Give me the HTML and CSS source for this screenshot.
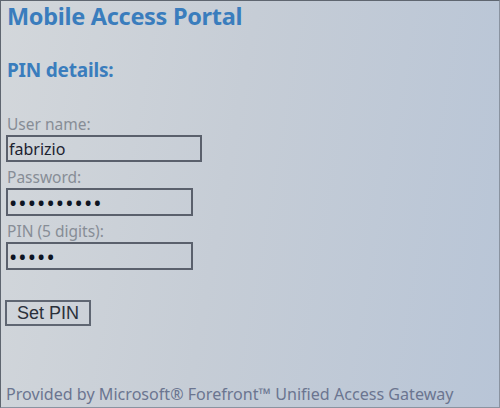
FILE: index.html
```html
<!DOCTYPE html>
<html lang="en">
<head>
    <meta charset="UTF-8">
    <meta name="viewport" content="width=device-width, initial-scale=1.0">
    <title>Mobile Access Portal</title>
    <link rel="stylesheet" href="styles.css">
</head>
<body>
    <div class="screen">
        <h1>Mobile Access Portal</h1>
        <h2>PIN details:</h2>

        <form class="pin-form">
            <label for="user">User name:</label>
            <input type="text" id="user" class="field wide" value="fabrizio">

            <label for="pass">Password:</label>
            <input type="password" id="pass" class="field" value="1234567890">

            <label for="pin">PIN (5 digits):</label>
            <input type="password" id="pin" class="field" value="12345">

            <button type="button" class="btn">Set PIN</button>
        </form>

        <p class="footer">Provided by Microsoft&reg; Forefront&trade; Unified Access Gateway</p>
    </div>
</body>
</html>
```

FILE: styles.css
```css
html, body {
    margin: 0;
    height: 100%;
}
body {
    font-family: "Noto Sans", "Open Sans", sans-serif;
}
.screen {
    box-sizing: border-box;
    height: 408px;
    border: 1px solid #5f6670;
    border-right-color: #8a93a0;
    border-bottom-color: #8a93a0;
    background: linear-gradient(100deg, #d3d7db 0%, #c6cdd6 45%, #b8c5d7 100%);
    padding: 0 5px;
    display: flex;
    flex-direction: column;
}
h1 {
    margin: 0;
    padding: 2px 0 0 1px;
    font-size: 23.5px;
    line-height: 26px;
    color: #3a7dbd;
    font-weight: 700;
    letter-spacing: -0.3px;
}
h2 {
    margin: 29px 0 0;
    padding-left: 1px;
    font-size: 19px;
    line-height: 24px;
    color: #3a7dbd;
    font-weight: 700;
    letter-spacing: -0.2px;
}
.pin-form {
    display: flex;
    flex-direction: column;
    align-items: flex-start;
    margin-top: 32px;
}
.pin-form label {
    font-size: 15.5px;
    line-height: 20px;
    color: #878d96;
    height: 21px;
    padding-left: 1px;
}
/* text boxes */
.field {
    box-sizing: border-box;
    width: 187px;
    height: 28px;
    margin: 0 0 5px;
    padding: 0 1px;
    border: 2px solid #5a606c;
    background: transparent;
    font-family: inherit;
    font-size: 16px;
    color: #1c2230;
}
.field.wide {
    width: 196px;
    height: 27px;
}
.field[type="password"] {
    font-size: 22px;
    letter-spacing: 1.1px;
    color: #0e1422;
}
.btn {
    box-sizing: border-box;
    margin: 25px 0 0 -1px;
    width: 86px;
    height: 26px;
    border: 2px solid #5f6672;
    background: transparent;
    font-family: "Liberation Sans", Arial, sans-serif;
    font-size: 18px;
    color: #2a303a;
    padding: 0;
}
.footer {
    margin: auto 0 3px;
    font-size: 16.1px;
    line-height: 20px;
    color: #6b7590;
}
```
